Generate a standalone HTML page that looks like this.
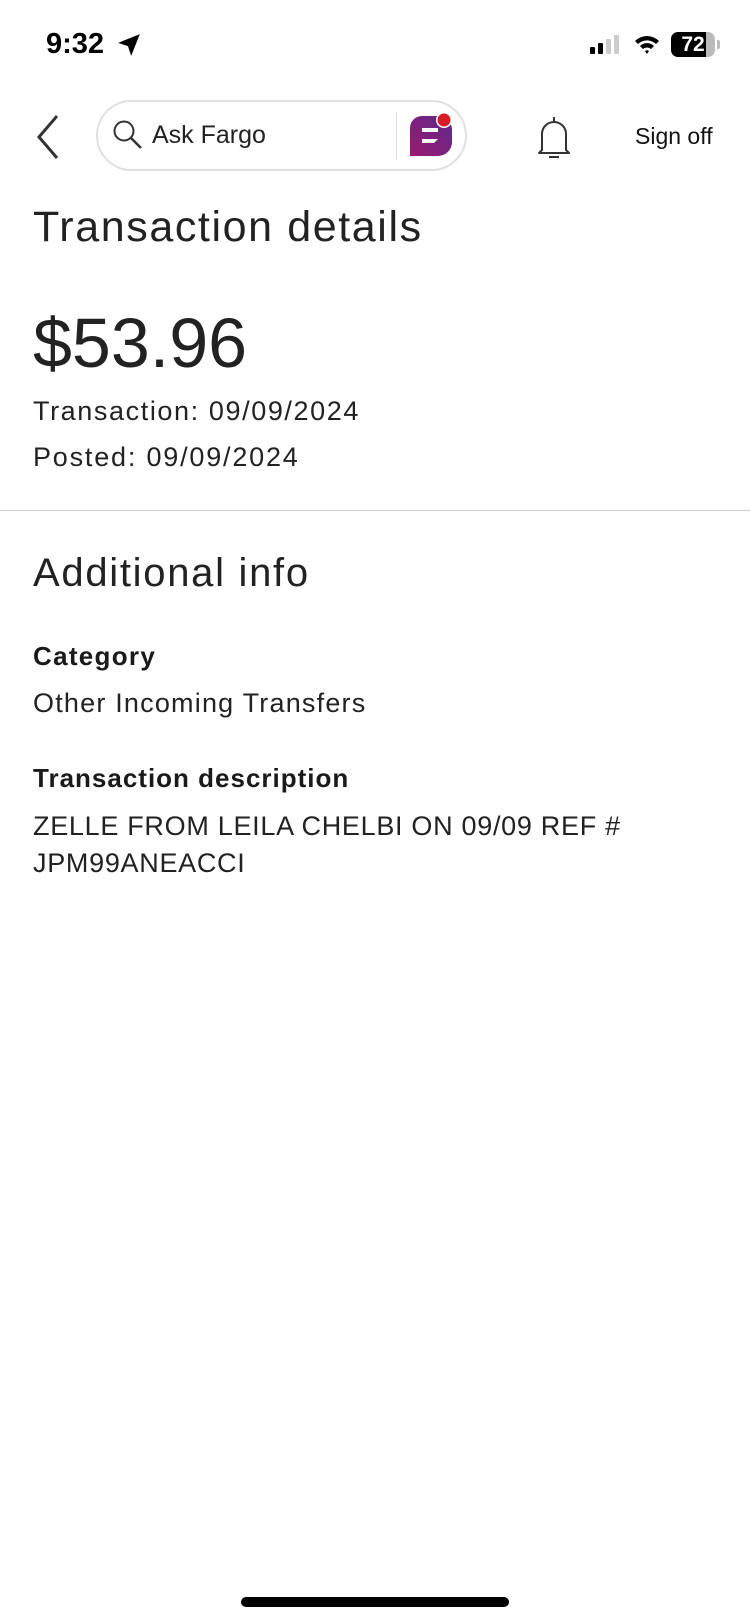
<!DOCTYPE html>
<html><head><meta charset="utf-8"><style>
*{margin:0;padding:0;box-sizing:border-box}
body{width:750px;height:1624px;background:#fff;font-family:"Liberation Sans",sans-serif;color:#1d1d1d;position:relative;overflow:hidden}
.a{position:absolute;white-space:nowrap;line-height:1}
</style></head><body>
<div class="a" style="left:46px;top:30px;font-size:29px;font-weight:bold;color:#000">9:32</div>
<svg class="a" style="left:116px;top:32px" width="26" height="26" viewBox="0 0 24 24"><path d="M22 2 L2 10 L11 13 L14 22 Z" fill="#000"/></svg>
<svg class="a" style="left:590px;top:35px" width="36" height="20"><rect x="0" y="12" width="5" height="7" rx="1" fill="#000"/><rect x="8" y="8" width="5" height="11" rx="1" fill="#000"/><rect x="16" y="4" width="5" height="15" rx="1" fill="#ccc"/><rect x="24" y="0" width="5" height="19" rx="1" fill="#ccc"/></svg>
<svg class="a" style="left:633px;top:33px" width="28" height="22" viewBox="0 0 28 22"><path d="M2 8 A17 17 0 0 1 26 8 L23 11 A13 13 0 0 0 5 11Z M7 13 A10 10 0 0 1 21 13 L18 16 A6 6 0 0 0 10 16Z M12 18 L14 21 L16 18 A3 3 0 0 0 12 18Z" fill="#000"/></svg>
<div class="a" style="left:671px;top:32px;width:44px;height:25px;border-radius:7px;background:linear-gradient(90deg,#000 80%,#bbb 80%);color:#fff;font-weight:bold;font-size:21px;text-align:center;line-height:25px">72</div>
<div class="a" style="left:717px;top:40px;width:3px;height:9px;background:#bbb;border-radius:0 2px 2px 0"></div>

<svg class="a" style="left:33px;top:113px" width="30" height="48"><path d="M24 3 L6 24 L24 45" stroke="#333" stroke-width="3" fill="none"/></svg>
<div class="a" style="left:96px;top:100px;width:371px;height:71px;border:2px solid #e2dfdf;border-radius:36px"></div>
<svg class="a" style="left:111px;top:118px" width="34" height="34"><circle cx="13" cy="13" r="9.5" stroke="#333" stroke-width="2" fill="none"/><path d="M20 20 L30 30" stroke="#333" stroke-width="2.5"/></svg>
<div class="a" style="left:152px;top:123px;font-size:25px;color:#222">Ask Fargo</div>
<div class="a" style="left:396px;top:112px;width:1px;height:48px;background:#ddd"></div>
<svg class="a" style="left:408px;top:112px" width="48" height="48" viewBox="0 0 48 48"><defs><linearGradient id="g" x1="0" y1="1" x2="1" y2="0"><stop offset="0" stop-color="#9b1a70"/><stop offset="1" stop-color="#5b2a8a"/></linearGradient></defs><path d="M14 4 H30 A14 14 0 0 1 44 18 V30 A14 14 0 0 1 30 44 H2 V16 A12 12 0 0 1 14 4Z" fill="url(#g)"/><path d="M14 16 H30 V20 H14Z M14 27 H30 L26 31 H14Z" fill="#fff"/><circle cx="36" cy="8" r="8" fill="#fff"/><circle cx="36" cy="8" r="6.5" fill="#d71e28"/></svg>
<svg class="a" style="left:534px;top:114px" width="40" height="46"><path d="M8 36 V20 A12 12 0 0 1 32 20 V36 L35 39 H5Z" stroke="#333" stroke-width="2" fill="none" stroke-linejoin="round"/><path d="M20 3 V8 M15 43 H25" stroke="#333" stroke-width="2"/></svg>
<div class="a" style="left:635px;top:125px;font-size:23px;color:#111">Sign off</div>

<div class="a" style="left:33px;top:206px;font-size:43px;letter-spacing:1.6px;color:#222">Transaction details</div>
<div class="a" style="left:33px;top:308px;font-size:70px;color:#222">$53.96</div>
<div class="a" style="left:33px;top:398px;font-size:27px;letter-spacing:1.6px;color:#222">Transaction: 09/09/2024</div>
<div class="a" style="left:33px;top:444px;font-size:27px;letter-spacing:1.8px;color:#222">Posted: 09/09/2024</div>
<div class="a" style="left:0;top:510px;width:750px;height:1px;background:#ccc"></div>
<div class="a" style="left:33px;top:553px;font-size:40px;letter-spacing:1.7px;color:#222">Additional info</div>
<div class="a" style="left:33px;top:643px;font-size:26px;font-weight:bold;letter-spacing:1.3px;color:#1a1a1a">Category</div>
<div class="a" style="left:33px;top:690px;font-size:27px;letter-spacing:1.2px;color:#222">Other Incoming Transfers</div>
<div class="a" style="left:33px;top:765px;font-size:26px;font-weight:bold;letter-spacing:1px;color:#1a1a1a">Transaction description</div>
<div class="a" style="left:33px;top:813px;font-size:27px;letter-spacing:0.7px;color:#222">ZELLE FROM LEILA CHELBI ON 09/09 REF #</div>
<div class="a" style="left:33px;top:850px;font-size:27px;letter-spacing:0.7px;color:#222">JPM99ANEACCI</div>
<div class="a" style="left:241px;top:1597px;width:268px;height:10px;border-radius:5px;background:#000"></div>
</body></html>
